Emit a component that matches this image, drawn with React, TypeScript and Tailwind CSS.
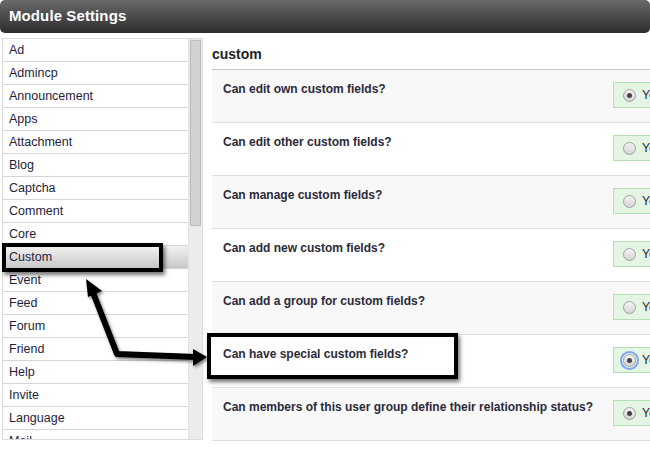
import React from 'react';

const modules = [
  'Ad', 'Admincp', 'Announcement', 'Apps', 'Attachment', 'Blog', 'Captcha',
  'Comment', 'Core', 'Custom', 'Event', 'Feed', 'Forum', 'Friend', 'Help',
  'Invite', 'Language', 'Mail',
];

const settings = [
  { label: 'Can edit own custom fields?', on: true },
  { label: 'Can edit other custom fields?', on: false },
  { label: 'Can manage custom fields?', on: false },
  { label: 'Can add new custom fields?', on: false },
  { label: 'Can add a group for custom fields?', on: false },
  { label: 'Can have special custom fields?', on: true, focus: true },
  { label: 'Can members of this user group define their relationship status?', on: true },
];

const Radio: React.FC<{ on: boolean; focus?: boolean }> = ({ on, focus }) => (
  <span
    className={
      'flex items-center justify-center w-[13px] h-[13px] rounded-full border border-[#a0a0a0] bg-gradient-to-b from-[#f4f4f4] to-[#d4d4d4] ' +
      (focus ? 'outline-2 outline-offset-1 outline-[#7aa7f0] rounded-[3px]' : '')
    }
  >
    {on && <span className="w-[5px] h-[5px] rounded-full bg-[#444]" />}
  </span>
);

const App: React.FC = () => {
  return (
    <div className="relative w-[650px] h-[454px] overflow-hidden bg-white font-['Liberation_Sans',Arial,sans-serif]">
      {/* header */}
      <div className="h-[33px] rounded-[5px] bg-gradient-to-b from-[#6a6a6a] to-[#2e2e2e] flex items-center px-[9px]">
        <h1 className="text-white font-bold text-[15px] tracking-[0.1px]">Module Settings</h1>
      </div>

      <div className="flex mt-[5px]">
        {/* module list */}
        <div className="ml-[2px] w-[201px] h-[402px] shrink-0 border border-[#dcdcdc] flex overflow-hidden">
          <ul className="flex-1">
            {modules.map((m) => (
              <li
                key={m}
                className={
                  'h-[23px] border-b border-[#d6d6d6] pl-[6px] flex items-center text-[12.5px] text-[#1e1e3c] ' +
                  (m === 'Custom' ? 'bg-gradient-to-b from-[#f2f2f2] to-[#c8c8c8]' : '')
                }
              >
                {m}
              </li>
            ))}
          </ul>
          <div className="w-[14px] bg-[#ececec] border-l border-[#e2e2e2] pt-[1px] px-[1px]">
            <div className="h-[186px] bg-[#d2d2d2] border border-[#bdbdbd]" />
          </div>
        </div>

        {/* settings */}
        <div className="ml-[9px] w-[460px] shrink-0">
          <h2 className="h-[31px] flex items-center font-bold text-[14px] text-[#222] pt-[1px]">custom</h2>
          <div className="border-t border-[#c4c4c4]">
            {settings.map((s, i) => (
              <div
                key={s.label}
                className={
                  'h-[53px] border-b border-[#e0e0e0] flex justify-between pl-[11px] ' +
                  (i % 2 === 0 ? 'bg-[#f8f8f8]' : 'bg-white')
                }
              >
                <span className="pt-[10px] text-[12px] font-bold text-[#2a2a3a]">{s.label}</span>
                <div className="mt-[12px] h-[26px] w-[59px] ml-auto bg-[#e4f5e4] border border-[#b4e0b4] flex items-center pl-[9px] gap-[6px] text-[12px] text-[#1e1e3c]">
                  <Radio on={s.on} focus={s.focus} />
                  <span>Yes</span>
                </div>
              </div>
            ))}
          </div>
        </div>
      </div>

      {/* annotations */}
      <div className="absolute left-[2px] top-[243px] w-[161px] h-[29px] border-[4px] border-black shadow-[2px_3px_4px_rgba(0,0,0,0.55)]" />
      <div className="absolute left-[207px] top-[333px] w-[251px] h-[46px] border-[4px] border-black shadow-[2px_3px_4px_rgba(0,0,0,0.55)]" />
      <svg className="absolute left-0 top-0 pointer-events-none" width="650" height="454" viewBox="0 0 650 454">
        <defs>
          <filter id="sh" x="-20%" y="-20%" width="140%" height="140%">
            <feDropShadow dx="1.5" dy="2" stdDeviation="1.5" floodColor="#000" floodOpacity="0.5" />
          </filter>
        </defs>
        <g filter="url(#sh)">
          <polyline points="92,290 117,354 196,357" fill="none" stroke="#000" strokeWidth="6" strokeLinejoin="round" />
          <polygon points="86,279 102,291 88,297" fill="#000" />
          <polygon points="207,357 193,349 193,366" fill="#000" />
        </g>
      </svg>
    </div>
  );
};

export default App;
